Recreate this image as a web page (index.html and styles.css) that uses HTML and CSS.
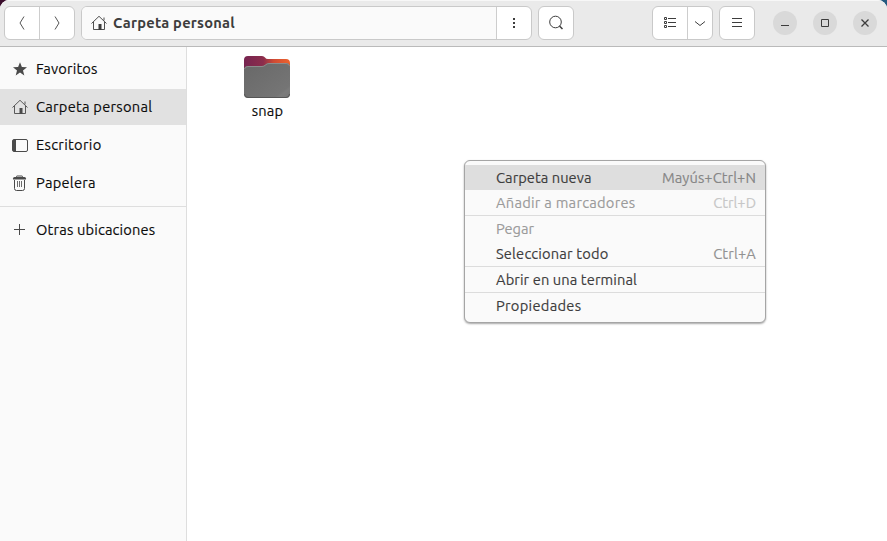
FILE: index.html
```html
<!DOCTYPE html>
<html lang="es">
<head>
<meta charset="utf-8">
<title>Carpeta personal</title>
<link rel="stylesheet" href="styles.css">
</head>
<body>
<svg class="defs" aria-hidden="true">
  <symbol id="home" viewBox="0 0 16 16"><path d="M.5 8.500 8 1.300l7.500 7.200M2.500 7v7.500h11V7M13 2.500V5.500" fill="none" stroke="currentColor" stroke-width=".9"/><path d="M7.500 9h3v6h-3z" fill="currentColor"/></symbol>
</svg>
<div class="window">
  <header class="headerbar">
    <div class="group nav">
      <button class="btn"><svg width="16" height="16"><path d="M10 1.500 6 8l4 6.500" class="line"/></svg></button>
      <button class="btn"><svg width="16" height="16"><path d="m6 1.500 4 6.500-4 6.500" class="line"/></svg></button>
    </div>
    <div class="group pathbar">
      <div class="path"><svg width="16" height="16"><use href="#home"/></svg><span class="title">Carpeta personal</span></div>
      <button class="btn"><svg width="16" height="16"><path d="M7 3h2v2H7zM7 7h2v2H7zM7 11h2v2H7z" fill="currentColor"/></svg></button>
    </div>
    <button class="group btn search"><svg width="16" height="16"><circle cx="7.500" cy="7" r="5.800" class="line"/><path d="m11.500 11 3 3" class="line thick"/></svg></button>
    <div class="group view">
      <button class="btn"><svg width="16" height="16"><path d="M2.500 2.500h2v2h-2zM2.500 6.500h2v2h-2zM2.500 10.500h2v2h-2zM6 3.500h8M6 7.500h8M6 11.500h8" class="line"/></svg></button>
      <button class="btn"><svg width="16" height="16"><path d="m3 6.500 5 4 5-4" class="line"/></svg></button>
    </div>
    <button class="group btn menu-button"><svg width="16" height="16"><path d="M3 3.500h10M3 7.500h10M3 11.500h10" class="line"/></svg></button>
    <div class="controls">
      <button class="control"><svg width="16" height="16"><path d="M4 10.500h8" class="line"/></svg></button>
      <button class="control"><svg width="16" height="16"><path d="M4.500 4.500h7v7h-7z" class="line"/></svg></button>
      <button class="control"><svg width="16" height="16"><path d="m4.500 4.500 7 7m0-7-7 7" class="line close"/></svg></button>
    </div>
  </header>
  <div class="content">
    <nav class="sidebar">
      <a class="place"><svg width="16" height="16"><path d="m8 1.200 1.900 4.700 5.100.3-4 3.200 1.300 5L8 11.600l-4.300 2.800 1.300-5-4-3.200 5.100-.3z" fill="currentColor"/></svg><span class="fav">Favoritos</span></a>
      <a class="place selected"><svg width="16" height="16"><use href="#home"/></svg><span class="per">Carpeta personal</span></a>
      <a class="place"><svg width="16" height="16"><rect x=".5" y="2.500" width="15" height="12" rx="1.500" class="line"/><path d="M1 3h3v11H1z" fill="currentColor"/></svg><span class="esc">Escritorio</span></a>
      <a class="place"><svg width="16" height="16"><path d="M4.500 3V1.500q0-.5.500-.5h5q.5 0 .5.500V3M2.500 5v8.500q0 2 2 2h6q2 0 2-2V5" class="line"/><path d="M5.500 6v6M7.500 6v6M9.500 6v6" class="line faint"/><path d="M1 3.500Q1 2 2.500 2h10Q14 2 14 3.500V4.500H1z" fill="currentColor"/></svg><span class="pap">Papelera</span></a>
      <div class="rule"></div>
      <a class="place"><svg width="16" height="16"><path d="M7.500 2v11M2 7.500h11" class="line"/></svg><span class="otr">Otras ubicaciones</span></a>
    </nav>
    <main class="files">
      <div class="file">
        <svg width="48" height="44" viewBox="0 0 48 44">
          <defs>
            <linearGradient id="back"><stop stop-color="#762450"/><stop offset=".42" stop-color="#8c2d4c"/><stop offset=".65" stop-color="#d04b34"/><stop offset="1" stop-color="#ee642e"/></linearGradient>
            <linearGradient id="front" x2="1" y2="1"><stop stop-color="#686868"/><stop offset=".82" stop-color="#757575"/><stop offset=".86" stop-color="#7b7b7b"/><stop offset="1" stop-color="#777"/></linearGradient>
          </defs>
          <path d="M1 5q0-4 4-4h14q2 0 3 1.500T25 4h18q4 0 4 4v31H1z" fill="url(#back)"/>
          <path d="M1 15q0-4 4-4h14q2 0 3.500-1.500T26 8h17q4 0 4 4v27q0 4-4 4H5q-4 0-4-4z" fill="url(#front)"/>
          <path d="M1.500 14q.5-2.500 3.500-2.500h14q2 0 3.500-1.500T26 8.500h17q3 0 3.500 2.500" fill="none" stroke="#8c8c8c"/>
          <path d="M1.500 39q0 3.500 3.500 3.500h38q3.500 0 3.500-3.500" fill="none" stroke="#555"/>
        </svg>
        <span class="snap">snap</span>
      </div>
    </main>
  </div>
  <div class="popover">
    <div class="item hover"><span class="new">Carpeta nueva</span><kbd class="kn">Mayús+Ctrl+N</kbd></div>
    <div class="item disabled"><span class="add">Añadir a marcadores</span><kbd>Ctrl+D</kbd></div>
    <hr>
    <div class="item disabled"><span>Pegar</span></div>
    <div class="item"><span class="all">Seleccionar todo</span><kbd class="ka">Ctrl+A</kbd></div>
    <hr>
    <div class="item"><span class="term">Abrir en una terminal</span></div>
    <hr>
    <div class="item"><span class="prop">Propiedades</span></div>
  </div>
</div>
</body>
</html>
```
FILE: styles.css
```css
* { box-sizing: border-box; }
body {
  margin: 0;
  background: linear-gradient(90deg, #3a0d2c 50%, #245a80 50%);
  font: 14.667px/20px Ubuntu, "Noto Sans", sans-serif;
  color: #0c0c0c;
}
.defs { position: absolute; width: 0; height: 0; }
svg { display: block; flex: none; }
.line { fill: none; stroke: currentColor; }
.thick { stroke-width: 1.5; }
.close { stroke-width: 1.3; }
.faint { opacity: .8; }
button { font: inherit; color: inherit; padding: 0; border: 0; background: none; }
.window { position: relative; display: flex; flex-direction: column; height: 541px; border-radius: 9px 9px 0 0; overflow: hidden; background: #fff; }
.headerbar { display: flex; align-items: flex-start; height: 47px; padding: 6px 10px 0 4px; background: #eaeaea; border-bottom: 1px solid #bababa; box-shadow: inset 0 1px #f7f7f7; color: #3d3d3d; }
.group { display: flex; height: 34px; border: 1px solid #c9c9c9; border-radius: 6px; background: #fff; overflow: hidden; }
.btn { display: flex; flex: 1; align-items: center; justify-content: center; }
.group .btn + .btn, .path + .btn { border-left: 1px solid #cdcdcd; }
.nav { width: 71px; margin-right: 6px; color: #555; }
.pathbar { width: 451px; margin-right: 6px; }
.path { display: flex; align-items: center; gap: 6px; width: 414px; padding-left: 9px; background: #fafafa; }
.title { font-weight: 700; letter-spacing: .24px; }
.search, .menu-button { flex: none; width: 36px; }
.view { width: 61px; margin: 0 6px 0 78px; }
.view .btn:last-child { flex: 0 0 25px; }
.controls { display: flex; gap: 16px; margin: 5px 0 0 auto; }
.control { display: flex; align-items: center; justify-content: center; width: 24px; height: 24px; border-radius: 50%; background: #d9d9d9; }
.content { display: flex; flex: 1; -webkit-text-stroke: .15px currentColor; }
.sidebar { display: flex; flex-direction: column; gap: 2px; width: 187px; padding-top: 4px; background: #fafafa; border-right: 1px solid #dedede; }
.place { display: flex; align-items: center; gap: 8px; height: 36px; padding-left: 12px; white-space: nowrap; }
.place svg { color: #4a4a4a; }
.selected { background: #e1e1e1; }
.rule { height: 1px; margin: 3px 0; background: #dedede; }
.fav { letter-spacing: .15px; }
.per, .pap { letter-spacing: .25px; }
.esc { letter-spacing: .3px; }
.otr, .all { letter-spacing: .17px; }
.files { padding: 8px 0 0 56px; }
.file { display: flex; flex-direction: column; align-items: center; width: 48px; gap: 2px; }
.snap { padding-left: 1px; letter-spacing: .2px; white-space: nowrap; }
.popover { position: absolute; left: 464px; top: 160px; width: 302px; padding: 4px 0; border: 1px solid #a5a5a5; border-radius: 6px; background: #fafafa; box-shadow: 0 1px 2px rgb(0 0 0 / 35%); color: #3d3d3d; -webkit-text-stroke: .15px currentColor; }
.item { display: flex; align-items: center; justify-content: space-between; height: 25px; padding: 0 9px 0 31px; white-space: nowrap; }
.item kbd { font: inherit; color: #929292; }
.item .kn { letter-spacing: .07px; }
.item .ka { letter-spacing: .15px; }
.new { letter-spacing: .05px; }
.add { letter-spacing: .26px; }
.term { letter-spacing: .1px; }
.prop { letter-spacing: .28px; }
.hover { background: #dedede; }
.hover kbd { color: #868686; }
.disabled { color: #9b9b9b; }
.disabled kbd { color: #c7c7c7; }
hr { height: 1px; margin: 0; border: 0; background: #dcdcdc; }
```
